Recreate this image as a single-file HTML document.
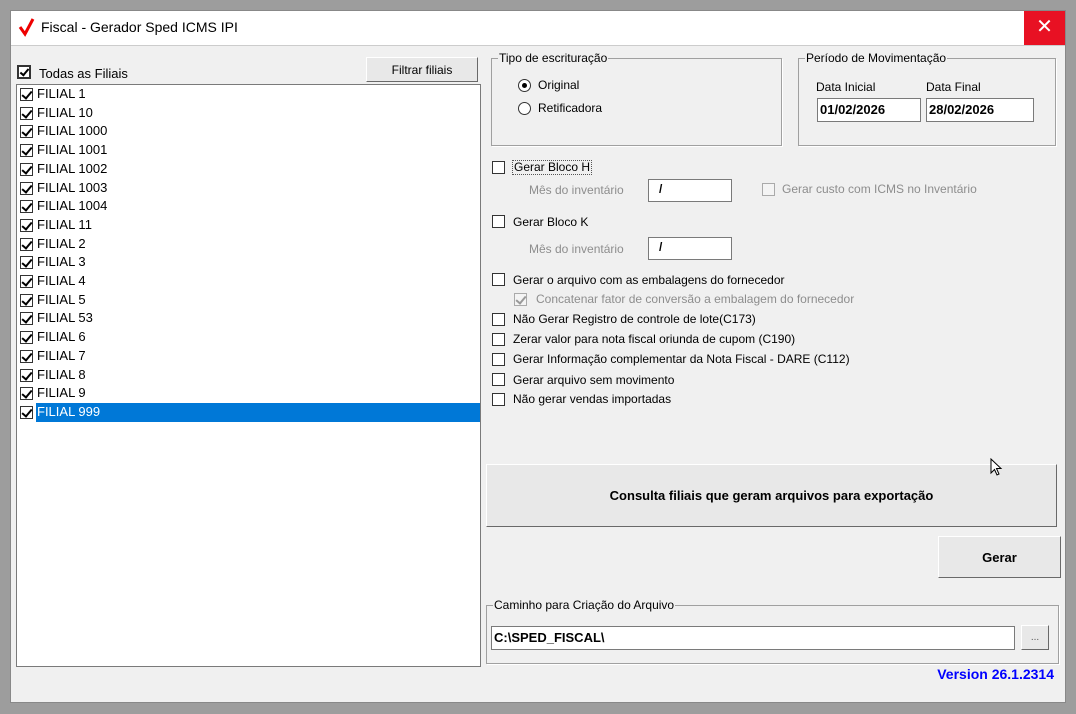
<!DOCTYPE html>
<html><head><style>
*{box-sizing:border-box}
body{margin:0;width:1076px;height:714px;background:#9d9d9d;font-family:"Liberation Sans",sans-serif;font-size:12px;color:#000;position:relative;overflow:hidden}
.win{position:absolute;left:10px;top:10px;width:1056px;height:693px;background:#f0f0f0;border:1px solid #888}
.title{position:absolute;left:0;top:0;width:100%;height:35px;background:#fff;border-bottom:1px solid #ccc}
.a{position:absolute}
.cb{position:absolute;width:13px;height:13px;border:1px solid #333;background:#fff}
.cb.on::after{content:"";position:absolute;left:3px;top:0px;width:4px;height:8px;border:solid #000;border-width:0 2px 2px 0;transform:rotate(40deg)}
.cb.big.on::after{left:3px;top:0px;width:3px;height:7px}
.cb.dis{border-color:#aaa;background:#f4f4f4}
.cb.dis.on::after{border-color:#999}
.grp{position:absolute;border:1px solid #a0a0a0;box-shadow:1px 1px 0 #fff}
.grp>span{position:absolute;left:6px;top:-8px;background:#f0f0f0;padding:0 1px}
.btn{position:absolute;background:#e8e8e8;border:1px solid;border-color:#fff #696969 #696969 #fff;display:flex;align-items:center;justify-content:center}
.inp{position:absolute;background:#fff;border:1px solid #7a7a7a;padding-left:2px}
.item{position:absolute;left:3px;height:19px;width:462px}
.item .cb{left:0px;top:3px}
.item span{position:absolute;left:16px;top:1px;font-size:13px;padding:0 1px}
.gray{color:#8d8d8d}
.lbl{position:absolute;font-size:12px}
</style></head><body>
<div class="win">
<div class="title">
<svg class="a" style="left:7px;top:6px" width="18" height="20"><path d="M2 10 L7 17 L15 2" stroke="#e00" stroke-width="3" fill="none"/></svg>
<div class="a" style="left:30px;top:8px;font-size:14px">Fiscal - Gerador Sped ICMS IPI</div>
<div class="a" style="left:1013px;top:0;width:41px;height:34px;background:#e81123;color:#fff;font-size:20px;text-align:center;line-height:32px">✕</div>
</div>

<div class="cb big on" style="left:6px;top:54px;width:14px;height:14px;border-width:2px"></div>
<div class="lbl" style="left:28px;top:55px;font-size:13px">Todas as Filiais</div>
<div class="btn" style="left:355px;top:46px;width:112px;height:25px">Filtrar filiais</div>

<div class="a" style="left:5px;top:73px;width:465px;height:583px;background:#fff;border:1px solid #7a7a7a">
<div class="item" style="top:0"><div class="cb on"></div><span>FILIAL 1</span></div>
<div class="item" style="top:18.7px"><div class="cb on"></div><span>FILIAL 10</span></div>
<div class="item" style="top:37.4px"><div class="cb on"></div><span>FILIAL 1000</span></div>
<div class="item" style="top:56.1px"><div class="cb on"></div><span>FILIAL 1001</span></div>
<div class="item" style="top:74.8px"><div class="cb on"></div><span>FILIAL 1002</span></div>
<div class="item" style="top:93.5px"><div class="cb on"></div><span>FILIAL 1003</span></div>
<div class="item" style="top:112.2px"><div class="cb on"></div><span>FILIAL 1004</span></div>
<div class="item" style="top:130.9px"><div class="cb on"></div><span>FILIAL 11</span></div>
<div class="item" style="top:149.6px"><div class="cb on"></div><span>FILIAL 2</span></div>
<div class="item" style="top:168.3px"><div class="cb on"></div><span>FILIAL 3</span></div>
<div class="item" style="top:187px"><div class="cb on"></div><span>FILIAL 4</span></div>
<div class="item" style="top:205.7px"><div class="cb on"></div><span>FILIAL 5</span></div>
<div class="item" style="top:224.4px"><div class="cb on"></div><span>FILIAL 53</span></div>
<div class="item" style="top:243.1px"><div class="cb on"></div><span>FILIAL 6</span></div>
<div class="item" style="top:261.8px"><div class="cb on"></div><span>FILIAL 7</span></div>
<div class="item" style="top:280.5px"><div class="cb on"></div><span>FILIAL 8</span></div>
<div class="item" style="top:299.2px"><div class="cb on"></div><span>FILIAL 9</span></div>
<div class="item" style="top:317.9px"><div class="cb on"></div><span style="background:#0078d7;color:#fff;width:444px;height:19px;top:0;padding-top:1px">FILIAL 999</span></div>
</div>

<div class="grp" style="left:480px;top:47px;width:291px;height:88px"><span>Tipo de escrituração</span></div>
<div class="a" style="left:507px;top:68px;width:13px;height:13px;border:1px solid #333;border-radius:50%;background:#fff"><div style="position:absolute;left:3px;top:3px;width:5px;height:5px;border-radius:50%;background:#000"></div></div>
<div class="lbl" style="left:527px;top:67px">Original</div>
<div class="a" style="left:507px;top:91px;width:13px;height:13px;border:1px solid #333;border-radius:50%;background:#fff"></div>
<div class="lbl" style="left:527px;top:90px">Retificadora</div>

<div class="grp" style="left:787px;top:47px;width:258px;height:88px"><span>Período de Movimentação</span></div>
<div class="lbl" style="left:805px;top:69px">Data Inicial</div>
<div class="lbl" style="left:915px;top:69px">Data Final</div>
<div class="inp" style="left:806px;top:87px;width:104px;height:24px;font-weight:bold;font-size:13px;line-height:21px">01/02/2026</div>
<div class="inp" style="left:915px;top:87px;width:108px;height:24px;font-weight:bold;font-size:13px;line-height:21px">28/02/2026</div>

<div class="cb" style="left:481px;top:150px"></div><div class="lbl" style="left:501px;top:149px;border:1px dotted #555;padding:0 1px;line-height:13px">Gerar Bloco H</div>
<div class="lbl gray" style="left:518px;top:172px">Mês do inventário</div>
<div class="inp" style="left:637px;top:168px;width:84px;height:23px;font-weight:bold;line-height:19px;padding-left:10px">/</div>
<div class="cb dis" style="left:751px;top:172px"></div><div class="lbl gray" style="left:771px;top:171px">Gerar custo com ICMS no Inventário</div>

<div class="cb" style="left:481px;top:204px"></div><div class="lbl" style="left:502px;top:204px">Gerar Bloco K</div>
<div class="lbl gray" style="left:518px;top:231px">Mês do inventário</div>
<div class="inp" style="left:637px;top:226px;width:84px;height:23px;font-weight:bold;line-height:19px;padding-left:10px">/</div>

<div class="cb" style="left:481px;top:262px"></div><div class="lbl" style="left:502px;top:262px">Gerar o arquivo com as embalagens do fornecedor</div>
<div class="cb dis on" style="left:503px;top:282px"></div><div class="lbl gray" style="left:525px;top:281px">Concatenar fator de conversão a embalagem do fornecedor</div>
<div class="cb" style="left:481px;top:302px"></div><div class="lbl" style="left:502px;top:301px">Não Gerar Registro de controle de lote(C173)</div>
<div class="cb" style="left:481px;top:322px"></div><div class="lbl" style="left:502px;top:321px">Zerar valor para nota fiscal oriunda de cupom (C190)</div>
<div class="cb" style="left:481px;top:342px"></div><div class="lbl" style="left:502px;top:341px">Gerar Informação complementar da Nota Fiscal - DARE (C112)</div>
<div class="cb" style="left:481px;top:362px"></div><div class="lbl" style="left:502px;top:362px">Gerar arquivo sem movimento</div>
<div class="cb" style="left:481px;top:382px"></div><div class="lbl" style="left:502px;top:381px">Não gerar vendas importadas</div>

<div class="btn" style="left:475px;top:453px;width:571px;height:63px;font-weight:bold;font-size:13px">Consulta filiais que geram arquivos para exportação</div>
<svg class="a" style="left:979px;top:447px" width="14" height="20"><path d="M1 1 L1 15 L4.5 11.5 L7 17 L9 16 L6.5 10.5 L11 10.5 Z" fill="#fff" stroke="#000"/></svg>
<div class="btn" style="left:927px;top:525px;width:123px;height:42px;font-weight:bold;font-size:13px">Gerar</div>

<div class="grp" style="left:475px;top:594px;width:573px;height:59px"><span>Caminho para Criação do Arquivo</span></div>
<div class="inp" style="left:480px;top:615px;width:524px;height:24px;font-weight:bold;font-size:13px;line-height:21px">C:\SPED_FISCAL\</div>
<div class="btn" style="left:1010px;top:614px;width:28px;height:25px;font-size:10px;color:#555">...</div>
<div class="lbl" style="right:11px;top:655px;color:#0000ff;font-weight:bold;font-size:14px">Version 26.1.2314</div>
</div>
</body></html>
